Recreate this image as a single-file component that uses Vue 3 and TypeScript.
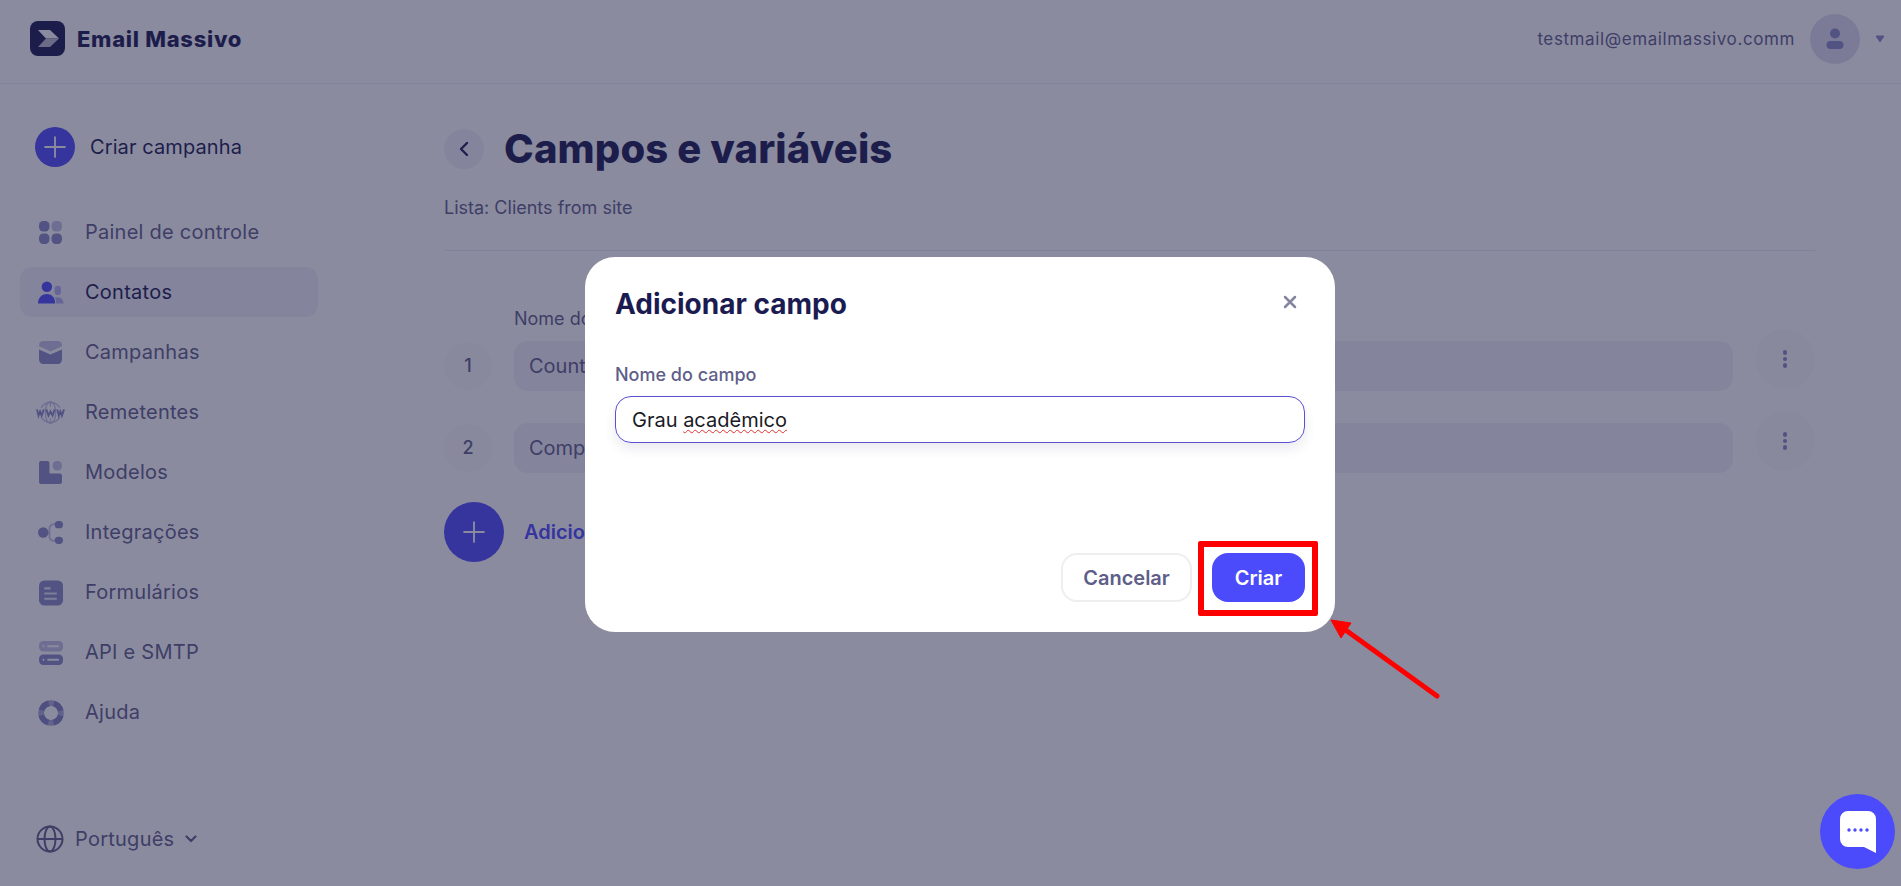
<script setup lang="ts">
import { ref } from 'vue'

interface NavItem {
  id: string
  label: string
  active?: boolean
}

const navItems: NavItem[] = [
  { id: 'dashboard', label: 'Painel de controle' },
  { id: 'contacts', label: 'Contatos', active: true },
  { id: 'campaigns', label: 'Campanhas' },
  { id: 'senders', label: 'Remetentes' },
  { id: 'templates', label: 'Modelos' },
  { id: 'integrations', label: 'Integrações' },
  { id: 'forms', label: 'Formulários' },
  { id: 'api', label: 'API e SMTP' },
  { id: 'help', label: 'Ajuda' }
]

const fields = ['Country', 'Company']
const fieldName = ref('Grau')
</script>

<template>
  <div class="page">
    <header class="topbar">
      <div class="brand">
        <svg class="brand-logo" viewBox="0 0 35 35">
          <rect width="35" height="35" rx="8" fill="#1b1b52" />
          <path d="M8 9h12l9 8.500H16z" fill="#fff" />
          <path d="M16 17.500h13l-9 8.500H8z" fill="#bcbccc" />
        </svg>
        <span class="brand-name">Email Massivo</span>
      </div>
      <div class="account">
        <span class="account-mail">testmail@emailmassivo.comm</span>
        <span class="avatar">
          <svg viewBox="0 0 24 24" width="24" height="24">
            <circle cx="12" cy="6.500" r="5" fill="#8888c4" />
            <rect x="3.500" y="14" width="17" height="8" rx="4" fill="#8888c4" />
          </svg>
        </span>
        <svg class="account-caret" viewBox="0 0 10 8" width="10" height="8">
          <path d="M1 1h8L5 7z" fill="#8888c4" stroke="#8888c4" stroke-linejoin="round" />
        </svg>
      </div>
    </header>

    <div class="body">
      <aside class="sidebar">
        <div class="create">
          <span class="create-btn">
            <svg viewBox="0 0 20 20" width="22" height="22">
              <path d="M10 1v18M1 10h18" stroke="#fff" stroke-width="1.700" stroke-linecap="round" />
            </svg>
          </span>
          <span>Criar campanha</span>
        </div>

        <nav class="nav">
          <div
            v-for="item in navItems"
            :key="item.id"
            class="nav-item"
            :class="{ active: item.active }"
          >
            <svg class="nav-icon" viewBox="0 0 24 24">
              <template v-if="item.id === 'dashboard'">
                <rect x="1" y="1" width="10" height="10" rx="4" fill="#8888c4" />
                <rect x="13" y="1" width="10" height="10" rx="4" fill="#c3c3e3" />
                <rect x="1" y="13" width="10" height="10" rx="4" fill="#8888c4" />
                <rect x="13" y="13" width="10" height="10" rx="4" fill="#8888c4" />
              </template>
              <template v-else-if="item.id === 'contacts'">
                <circle cx="8.500" cy="6.500" r="5" fill="#4b4bfb" />
                <path d="M0 22.500c0-5 3.500-9 8.500-9s8 4 8 9z" fill="#4b4bfb" />
                <rect x="16" y="5.500" width="6" height="9" rx="3" fill="#b0b0f0" />
                <path d="M17.500 22.500c0-2.500-.5-4.500-1.500-6h3.500c3 0 5 3 5 6z" fill="#b0b0f0" />
              </template>
              <template v-else-if="item.id === 'campaigns'">
                <path d="M1 5a4 4 0 0 1 4-4h14a4 4 0 0 1 4 4v1l-11 5L1 6z" fill="#c3c3e3" />
                <path d="M1 9l11 5 11-5v10a4 4 0 0 1-4 4H5a4 4 0 0 1-4-4z" fill="#8888c4" />
              </template>
              <template v-else-if="item.id === 'senders'">
                <g fill="none" stroke="#c3c3e3" stroke-width="1.300">
                  <path d="M3 7.500a10.500 10.500 0 0 1 18 0M3 16.500a10.500 10.500 0 0 0 18 0" />
                  <ellipse cx="12" cy="12" rx="5" ry="10.500" />
                  <path d="M12 1.500v5M12 17.500v5" />
                </g>
                <path d="M-1 9l1.500 6 1.500-4 1.500 4L5.500 9M8 9l2 6 2-4 2 4 2-6M18.500 9l1.500 6 1.500-4 1.500 4L25 9" fill="none" stroke="#8888c4" stroke-width="1.800" />
              </template>
              <template v-else-if="item.id === 'templates'">
                <path d="M1 3a2 2 0 0 1 2-2h6a2 2 0 0 1 2 2v9a1 1 0 0 0 1 1h9a2 2 0 0 1 2 2v6a2 2 0 0 1-2 2H3a2 2 0 0 1-2-2z" fill="#8888c4" />
                <rect x="14" y="1" width="9" height="9" rx="4" fill="#c3c3e3" />
              </template>
              <template v-else-if="item.id === 'integrations'">
                <path d="M7 12h4M19 4h-4c-2 0-4 2-4 4v8c0 2 2 4 4 4h4" fill="none" stroke="#c3c3e3" stroke-width="1.800" />
                <circle cx="5" cy="12" r="5" fill="#8888c4" />
                <rect x="16" y="1" width="8" height="7" rx="3.500" fill="#8888c4" />
                <rect x="16" y="16" width="8" height="7" rx="3.500" fill="#8888c4" />
              </template>
              <template v-else-if="item.id === 'forms'">
                <rect x="1" y="0.500" width="23" height="24" rx="5" fill="#8888c4" />
                <path d="M6 8h6M6 13h12M6 18h12" stroke="#e6e6f4" stroke-width="2" />
              </template>
              <template v-else-if="item.id === 'api'">
                <rect x="1" y="1" width="23" height="10" rx="4" fill="#c3c3e3" />
                <rect x="1" y="14" width="23" height="10" rx="4" fill="#8888c4" />
                <path d="M4.500 6h1.500M9 6h11M4.500 19h1.500M9 19h11" stroke="#fff" stroke-width="1.800" />
              </template>
              <template v-else>
                <circle cx="12.500" cy="12.500" r="9.500" fill="none" stroke="#a9a9d6" stroke-width="5.500" />
                <circle
                  cx="12.500"
                  cy="12.500"
                  r="9.500"
                  fill="none"
                  stroke="#8080bf"
                  stroke-width="5.500"
                  stroke-dasharray="10 4.925"
                  stroke-dashoffset="-2.460"
                />
              </template>
            </svg>
            <span>{{ item.label }}</span>
          </div>
        </nav>

        <div class="language">
          <svg viewBox="0 0 28 28" width="28" height="28" fill="none" stroke="#5e5e89" stroke-width="2">
            <circle cx="14" cy="14" r="12.500" />
            <ellipse cx="14" cy="14" rx="5.500" ry="12.500" />
            <path d="M1.500 14h25" />
          </svg>
          <span>Português</span>
          <svg viewBox="0 0 12 8" width="12" height="8" fill="none" stroke="#5e5e89" stroke-width="2.200" stroke-linecap="round" stroke-linejoin="round">
            <path d="M1.500 1.500L6 6l4.500-4.500" />
          </svg>
        </div>
      </aside>

      <main class="content">
        <div class="title-row">
          <button class="back" type="button">
            <svg viewBox="0 0 10 16" width="10" height="16" fill="none" stroke="#1e1e55" stroke-width="2.400" stroke-linecap="round" stroke-linejoin="round">
              <path d="M8 2L2 8l6 6" />
            </svg>
          </button>
          <h1>Campos e variáveis</h1>
        </div>
        <p class="list-name">Lista: Clients from site</p>
        <div class="divider"></div>

        <div class="field-label">Nome do campo</div>
        <div class="fields">
          <div v-for="(field, index) in fields" :key="field" class="field-row">
            <span class="field-index">{{ index + 1 }}</span>
            <div class="field-input">{{ field }}</div>
            <span class="field-menu">
              <i></i><i></i><i></i>
            </span>
          </div>
        </div>

        <div class="add-field">
          <span class="add-btn">
            <svg viewBox="0 0 20 20" width="22" height="22">
              <path d="M10 1v18M1 10h18" stroke="#fff" stroke-width="1.700" stroke-linecap="round" />
            </svg>
          </span>
          <span>Adicionar campo</span>
        </div>
      </main>
    </div>

    <div class="overlay">
      <div class="modal">
        <div class="modal-head">
          <h2>Adicionar campo</h2>
          <svg viewBox="0 0 14 14" width="14" height="14" fill="none" stroke="#85859f" stroke-width="2.500" stroke-linecap="round">
            <path d="M2 2l10 10M12 2L2 12" />
          </svg>
        </div>
        <label class="modal-label">Nome do campo</label>
        <div class="modal-input">{{ fieldName }} <span class="typo">acadêmico</span></div>
        <div class="modal-actions">
          <button class="btn-cancel" type="button">Cancelar</button>
          <button class="btn-create" type="button">Criar</button>
          <span class="highlight"></span>
        </div>
      </div>
    </div>

    <svg class="arrow" viewBox="0 0 120 90" width="120" height="90">
      <path d="M108 77L18 12" stroke="#f00" stroke-width="5" stroke-linecap="round" />
      <path d="M2 1l20 3-10 15z" fill="#f00" stroke="#f00" stroke-width="1" />
    </svg>

    <button class="chat" type="button">
      <svg viewBox="0 0 36 42" width="36" height="42">
        <path d="M8 0h20a8 8 0 0 1 8 8v34l-12-6H8a8 8 0 0 1-8-8V8a8 8 0 0 1 8-8z" fill="#fff" />
        <g fill="#4b4bfb">
          <circle cx="9" cy="19" r="1.700" />
          <circle cx="15" cy="19" r="1.700" />
          <circle cx="21" cy="19" r="1.700" />
          <circle cx="27" cy="19" r="1.700" />
        </g>
      </svg>
    </button>
  </div>
</template>

<style>
html,
body {
  margin: 0;
  height: 100%;
  overflow: hidden;
  background: #fff;
}
</style>

<style scoped>
.page {
  position: relative;
  display: flex;
  flex-direction: column;
  height: 100vh;
  overflow: hidden;
  font-family: Inter, "Liberation Sans", sans-serif;
  color: #5e5e89;
  background: #fff;
}

.topbar {
  display: flex;
  align-items: center;
  justify-content: space-between;
  height: 83px;
  flex-shrink: 0;
  padding: 0 16px 0 30px;
  border-bottom: 1px solid #ebebf3;
  box-sizing: content-box;
}

.brand {
  display: flex;
  align-items: center;
  gap: 12px;
  margin-top: -6px;
}

.brand-logo {
  width: 35px;
  height: 35px;
}

.brand-name {
  font-size: 22px;
  font-weight: 800;
  color: #1b1b52;
  letter-spacing: 0.7px;
}

.account {
  display: flex;
  align-items: center;
  margin-top: -6px;
}

.account-mail {
  font-size: 17px;
  letter-spacing: 0.6px;
}

.avatar {
  display: flex;
  align-items: center;
  justify-content: center;
  width: 50px;
  height: 50px;
  margin: 0 15px;
  border-radius: 50%;
  background: #dedeee;
}

.body {
  display: flex;
  flex: 1;
  min-height: 0;
}

.sidebar {
  display: flex;
  flex-direction: column;
  width: 340px;
  flex-shrink: 0;
  padding: 43px 22px 33px 20px;
  box-sizing: border-box;
}

.create {
  display: flex;
  align-items: center;
  gap: 15px;
  padding-left: 15px;
  font-size: 20px;
  letter-spacing: 0.1px;
  color: #1b1b52;
}

.create-btn,
.add-btn {
  display: flex;
  align-items: center;
  justify-content: center;
  border-radius: 50%;
  background: #4b4bfb;
}

.create-btn {
  width: 40px;
  height: 40px;
}

.nav {
  display: flex;
  flex-direction: column;
  gap: 10px;
  margin-top: 40px;
}

.nav-item {
  display: flex;
  align-items: center;
  gap: 22px;
  height: 50px;
  padding-left: 18px;
  border-radius: 12px;
  font-size: 20px;
  letter-spacing: 0.25px;
}

.nav-item.active {
  background: #f0f0f8;
  color: #1b1b52;
}

.nav-icon {
  width: 25px;
  height: 25px;
  flex-shrink: 0;
  overflow: visible;
}

.language {
  display: flex;
  align-items: center;
  gap: 11px;
  margin-top: auto;
  padding-left: 16px;
  font-size: 20px;
  letter-spacing: 0.25px;
}

.content {
  flex: 1;
  min-width: 0;
  padding: 41px 86px 0 104px;
}

.title-row {
  display: flex;
  align-items: center;
  gap: 20px;
  height: 48px;
}

.back {
  display: flex;
  align-items: center;
  justify-content: center;
  width: 40px;
  height: 40px;
  padding: 0;
  border: 0;
  border-radius: 50%;
  background: #f0f0f8;
}

h1 {
  margin: 0;
  font-size: 40px;
  font-weight: 800;
  line-height: 48px;
  letter-spacing: 0.13px;
  color: #1b1b52;
}

.list-name {
  margin: 24px 0 0;
  font-size: 18px;
  line-height: 22px;
}

.divider {
  height: 1px;
  margin-top: 31px;
  background: #ebebf3;
}

.field-label {
  margin: 58px 0 0 70px;
  font-size: 18px;
  line-height: 20px;
}

.fields {
  display: flex;
  flex-direction: column;
  gap: 32px;
  margin-top: 12px;
}

.field-row {
  display: flex;
  align-items: center;
  height: 50px;
}

.field-index {
  display: flex;
  align-items: center;
  justify-content: center;
  width: 48px;
  height: 48px;
  margin-right: 22px;
  padding-bottom: 2px;
  box-sizing: border-box;
  flex-shrink: 0;
  border-radius: 50%;
  background: #fafafd;
  font-size: 18px;
  font-weight: 500;
}

.field-input {
  flex: 1;
  height: 50px;
  padding-left: 15px;
  border-radius: 14px;
  background: #f0f0f8;
  font-size: 20px;
  line-height: 50px;
}

.field-menu {
  display: flex;
  flex-direction: column;
  align-items: center;
  justify-content: center;
  gap: 2px;
  width: 60px;
  height: 60px;
  margin: -14px 0 0 22px;
  flex-shrink: 0;
  border-radius: 50%;
  background: #fafafd;
}

.field-menu i {
  width: 4.500px;
  height: 4.500px;
  border-radius: 50%;
  background: #8888c4;
}

.add-field {
  display: flex;
  align-items: center;
  gap: 20px;
  margin-top: 29px;
  font-size: 20px;
  font-weight: 600;
  color: #4b4bfb;
}

.add-btn {
  width: 60px;
  height: 60px;
}

.overlay {
  position: absolute;
  inset: 0;
  display: flex;
  align-items: center;
  justify-content: center;
  padding: 3px 0 0 19px;
  background: rgba(32, 32, 70, 0.52);
}

.modal {
  display: flex;
  flex-direction: column;
  width: 750px;
  height: 375px;
  padding: 0 30px;
  box-sizing: border-box;
  border-radius: 30px;
  background: #fff;
}

.modal-head {
  display: flex;
  align-items: center;
  justify-content: space-between;
  padding: 30px 8px 0 0;
  height: 34px;
  box-sizing: content-box;
}

.modal-head svg {
  margin-top: -4px;
}

h2 {
  margin: 0;
  font-size: 28px;
  font-weight: 700;
  color: #1b1b52;
}

.modal-label {
  margin-top: 43px;
  font-size: 18px;
  font-weight: 500;
  line-height: 22px;
  color: #5e5e89;
}

.modal-input {
  height: 47px;
  margin: 10px 0 0;
  padding-left: 16px;
  box-sizing: border-box;
  border: 1px solid #5a50d0;
  border-radius: 16px;
  box-shadow: 0 6px 12px rgba(60, 60, 110, 0.1);
  font-size: 20px;
  line-height: 46px;
  color: #1a1a24;
}

.typo {
  text-decoration: underline wavy #e03030 1px;
  text-underline-offset: 2px;
}

.modal-actions {
  position: relative;
  display: flex;
  justify-content: flex-end;
  gap: 20px;
  margin-top: auto;
  padding-bottom: 30px;
}

.modal-actions button {
  height: 49px;
  border-radius: 16px;
  font-family: inherit;
  font-size: 20px;
  font-weight: 600;
}

.btn-cancel {
  width: 131px;
  border: 2px solid #eeeef0;
  background: #fff;
  color: #5e5e89;
}

.btn-create {
  width: 93px;
  border: 0;
  background: #4b4bfb;
  color: #fff;
}

.highlight {
  position: absolute;
  right: -13px;
  top: -12px;
  width: 120px;
  height: 75px;
  box-sizing: border-box;
  border: 6px solid #f00;
  border-radius: 2px;
}

.arrow {
  position: absolute;
  left: 1329px;
  top: 619px;
}

.chat {
  position: absolute;
  left: 1820px;
  top: 794px;
  display: flex;
  align-items: center;
  justify-content: center;
  width: 75px;
  height: 75px;
  padding: 0;
  border: 0;
  border-radius: 50%;
  background: #4b4bfb;
}
</style>
